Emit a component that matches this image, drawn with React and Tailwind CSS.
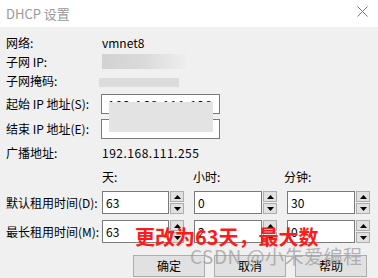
import React from "react";

const font = { fontFamily: '"Noto Sans CJK SC", "Noto Sans", sans-serif' };

function Arrow({ up }) {
  return (
    <svg width="7" height="4" viewBox="0 0 7 4">
      {up ? <polygon points="3.5,0 7,4 0,4" fill="#000" /> : <polygon points="0,0 7,0 3.5,4" fill="#000" />}
    </svg>
  );
}

function Spin({ value, w = "w-[67px]" }) {
  return (
    <div className="flex h-[23px]">
      <div className={`${w} h-full bg-white border border-[#7a7a7a] flex items-center pl-[3px] text-[12px] text-black`}>{value}</div>
      <div className="flex flex-col w-[14px] h-full ml-[1px] gap-[1px]">
        <div className="flex-1 bg-[#e1e1e1] border border-[#adadad] flex items-center justify-center"><Arrow up /></div>
        <div className="flex-1 bg-[#e1e1e1] border border-[#adadad] flex items-center justify-center"><Arrow /></div>
      </div>
    </div>
  );
}

function Row({ label, children, h = "h-[19px]" }) {
  return (
    <div className={`flex items-center ${h}`}>
      <div className="w-[96px] shrink-0 text-[12px] text-black">{label}</div>
      {children}
    </div>
  );
}

export default function App() {
  return (
    <div className="relative w-[378px] h-[278px] overflow-hidden bg-[#f0f0f0]" style={font}>
      <div className="h-[27px] bg-white flex items-center justify-between pl-[6px] pr-[10px]">
        <span className="text-[13px] text-[#999999]">DHCP 设置</span>
        <svg width="11" height="11" viewBox="0 0 11 11" className="mb-[5px]">
          <path d="M0.5 0.5 L10.5 10.5 M10.5 0.5 L0.5 10.5" stroke="#777" strokeWidth="1" />
        </svg>
      </div>
      <div className="pl-[6px] pt-[6px]">
        <Row label="网络:"><span className="text-[12px] text-black">vmnet8</span></Row>
        <Row label="子网 IP:">
          <div className="w-[84px] h-[15px] bg-gradient-to-r from-[#d2d2d2] via-[#dadada] to-[#eeeeee]" />
        </Row>
        <Row label="子网掩码:">
          <div className="w-[80px] h-[9px] -ml-[3px] mt-[4px] bg-[#dcdcdc]" />
        </Row>
        <div className="h-[4px]" />
        <Row label="起始 IP 地址(S):" h="h-[20px]">
          <div className="w-[119px] h-[20px] -ml-[1px] bg-white border border-[#7a7a7a] flex items-start pt-[1px] pl-[6px] text-[12px] tracking-[1px] overflow-hidden">192.168.111.128</div>
        </Row>
        <div className="h-[5px]" />
        <Row label="结束 IP 地址(E):" h="h-[20px]">
          <div className="w-[119px] h-[20px] -ml-[1px] bg-white border border-[#7a7a7a]" />
        </Row>
        <div className="h-[4px]" />
        <Row label="广播地址:">
          <span className="text-[12px] text-black tracking-[0.5px]">192.168.111.255</span>
        </Row>
        <div className="h-[5px]" />
        <Row label="">
          <div className="w-[91px] text-[12px]">天:</div>
          <div className="w-[91px] text-[12px]">小时:</div>
          <div className="text-[12px]">分钟:</div>
        </Row>
        <div className="h-[5px]" />
        <Row label="默认租用时间(D):" h="h-[23px]">
          <div className="flex gap-[10px]">
            <Spin value="63" />
            <Spin value="0" w="w-[68px]" />
            <Spin value="30" w="w-[68px]" />
          </div>
        </Row>
        <div className="h-[6px]" />
        <Row label="最长租用时间(M):" h="h-[23px]">
          <div className="flex gap-[10px]">
            <Spin value="63" />
            <Spin value="2" w="w-[68px]" />
            <Spin value="0" w="w-[68px]" />
          </div>
        </Row>
        <div className="flex gap-[9px] pl-[127px] mt-[12px]">
          {["确定", "取消", "帮助"].map((t) => (
            <div key={t} className="w-[72px] h-[22px] bg-[#e1e1e1] border border-[#adadad] flex items-center justify-center text-[12px] text-black">{t}</div>
          ))}
        </div>
      </div>

      {/* blur overlay over IP inputs */}
      <div className="absolute left-[109px] top-[102px] w-[104px] h-[30px] bg-[#e3e3e3]" />

      {/* annotation */}
      <div className="absolute left-[135px] top-[227px] text-[20px] font-bold text-[#ff1a1a] leading-none">更改为63天，最大数</div>

      {/* watermark */}
      <div className="absolute left-[190px] top-[246px] text-[19px] text-[#9a9a9a] opacity-70 leading-none tracking-[0.5px]">CSDN @小朱爱编程</div>
    </div>
  );
}
